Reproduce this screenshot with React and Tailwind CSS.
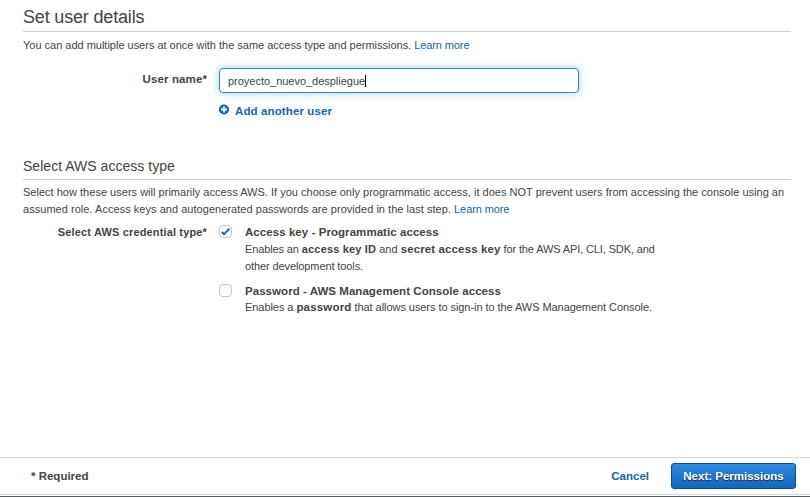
function PlusIcon() {
  return (
    <svg width="10" height="11" viewBox="0 0 10 11" className="mt-[2px] shrink-0">
      <circle cx="5" cy="5.5" r="5.1" fill="#1166bb" />
      <path d="M5 2.5v6M2 5.5h6" stroke="#fff" strokeWidth="1.8" />
    </svg>
  );
}

function Checkbox({ checked }) {
  return (
    <span className="flex h-[13px] w-[13px] shrink-0 items-center justify-center rounded-[4px] border border-[#c4c4c4] bg-white">
      {checked && (
        <svg width="11" height="11" viewBox="0 0 11 11">
          <path d="M1.8 6l2.3 2.1L9.4 2.6" fill="none" stroke="#1166bb" strokeWidth="2" />
        </svg>
      )}
    </span>
  );
}

export default function App() {
  return (
    <div className="flex h-[497px] w-[810px] flex-col overflow-hidden bg-white font-['Liberation_Sans',Arial,sans-serif] text-[11px] leading-[17px] whitespace-nowrap text-[#444]">
      <main className="h-[457px] pr-[19px] pl-[23px]">
        <h1 className="h-[32px] border-b border-[#ccc] pt-[6px] text-[18px] leading-[22px] tracking-[-0.17px]">
          Set user details
        </h1>
        <p className="mt-[5px] tracking-[-0.012px]">
          <span>You can add multiple users at once with the same access type and permissions. </span>
          <a className="tracking-[-0.1px] text-[#1166bb]">Learn more</a>
        </p>
        <div className="mt-[14px] flex">
          <div className="mr-[12px] w-[184px] pt-[3px] text-right text-[11.5px] font-bold tracking-[0.12px]">User name*</div>
          <div className="flex h-[25px] w-[360px] items-center rounded-[4px] border border-[#2e86de] bg-white pt-px pl-[8px] shadow-[0_0_7px_rgba(70,150,235,0.5)]">
            <span className="tracking-[-0.02px]">proyecto_nuevo_despliegue</span>
            <span className="h-[12px] w-px bg-black" />
          </div>
        </div>
        <div className="mt-[9px] ml-[196px] flex h-[17px] gap-[6px] text-[11.5px] font-bold tracking-[0.12px] text-[#1166bb]">
          <PlusIcon />
          <span className="pt-px">Add another user</span>
        </div>
        <h2 className="mt-[37px] h-[24px] border-b border-[#ccc] text-[14px] leading-[20px] tracking-[0.03px]">
          Select AWS access type
        </h2>
        <p className="mt-[4px]">
          <span className="tracking-[0.016px]">Select how these users will primarily access AWS. If you choose only programmatic access, it does NOT prevent users from accessing the console using an</span>
          <br />
          <span className="tracking-[0.036px]">assumed role. Access keys and autogenerated passwords are provided in the last step. </span>
          <a className="tracking-[-0.1px] text-[#1166bb]">Learn more</a>
        </p>
        <div className="mt-[6px] flex">
          <div className="mr-[12px] w-[184px] text-right font-bold tracking-[0.15px]">Select AWS credential type*</div>
          <div>
            <div className="flex gap-[13px]">
              <div className="pt-[1px]"><Checkbox checked /></div>
              <div>
                <div className="text-[11.5px] font-bold tracking-[0.06px]">Access key - Programmatic access</div>
                <div className="h-[17px] tracking-[-0.12px]">
                  Enables an <b className="tracking-[0.17px]">access key ID</b>
                  <span className="tracking-normal"> and </span>
                  <b className="text-[11.5px] tracking-[0.12px]">secret access key</b> for the AWS API, CLI, SDK, and
                </div>
                <div className="tracking-[-0.1px]">other development tools.</div>
              </div>
            </div>
            <div className="mt-[8px] flex gap-[13px]">
              <div className="pt-[1px]"><Checkbox /></div>
              <div>
                <div className="h-[16px] text-[11.5px] font-bold tracking-[0.05px]">Password - AWS Management Console access</div>
                <div className="tracking-[-0.06px]">
                  Enables a <b className="text-[11.5px] tracking-[0.18px]">password</b> that allows users to sign-in to the AWS Management Console.
                </div>
              </div>
            </div>
          </div>
        </div>
      </main>
      <footer className="flex h-[38px] shrink-0 items-center border-y border-[#d5d5d5] pr-[14px] pl-[31px] text-[11.5px] font-bold">
        <span>* Required</span>
        <a className="ml-auto text-[#1166bb]">Cancel</a>
        <button className="ml-[22px] h-[26px] w-[125px] rounded-[3px] border border-[#0c4a86] bg-linear-to-b from-[#2e8ae6] to-[#1166bb] text-white [text-shadow:0_1px_1px_#222]">
          Next: Permissions
        </button>
      </footer>
      <div className="mt-px h-px shrink-0 bg-[#545b64]" />
    </div>
  );
}
